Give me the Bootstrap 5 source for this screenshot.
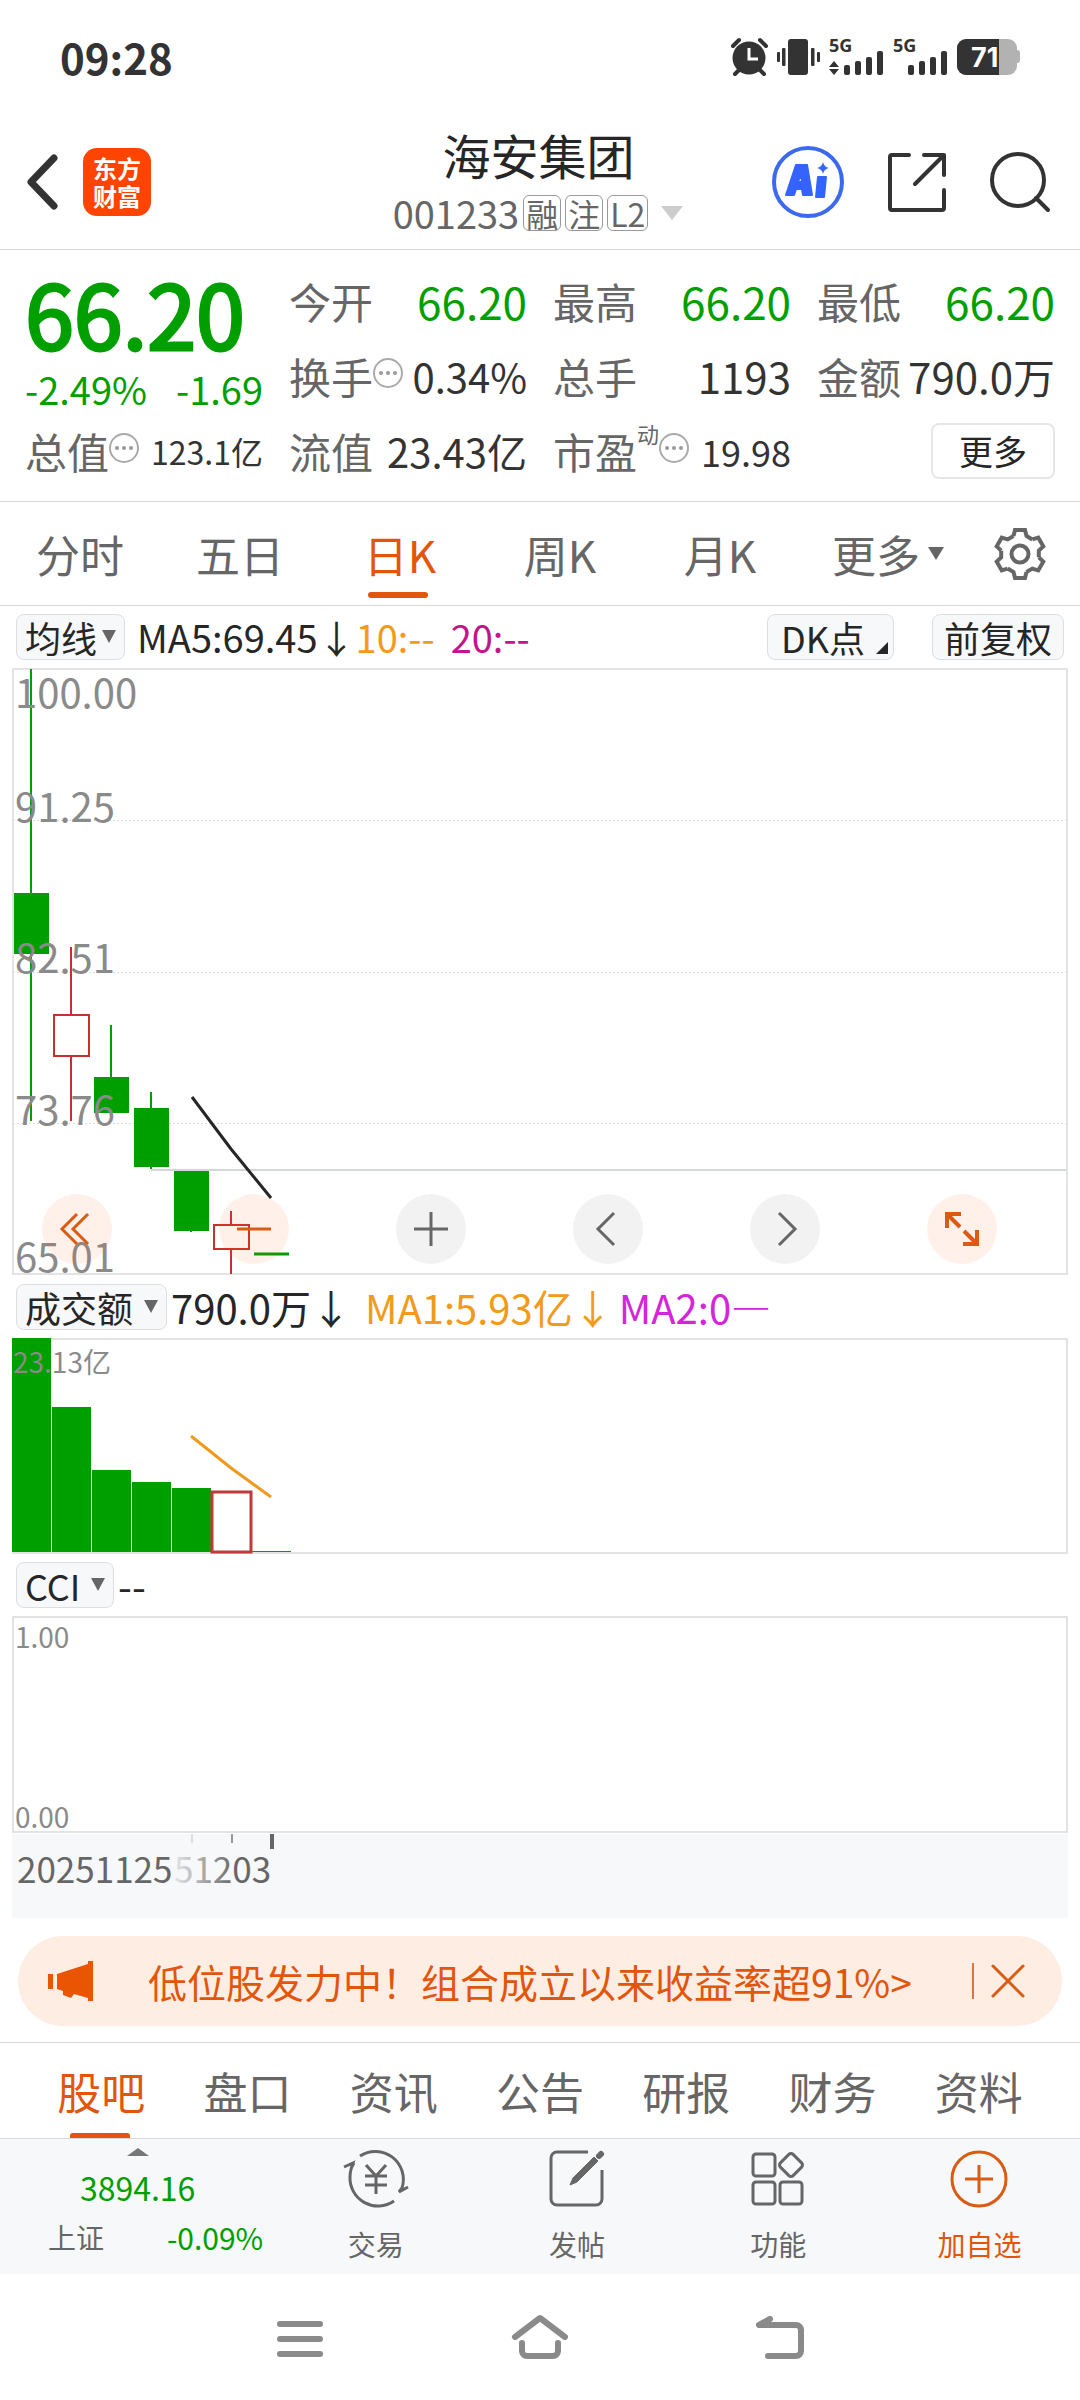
<!DOCTYPE html>
<html lang="zh-CN">
<head>
<meta charset="utf-8">
<meta name="viewport" content="width=device-width, initial-scale=1">
<title>海安集团 001233</title>
<link href="https://cdn.jsdelivr.net/npm/bootstrap@5.3.0/dist/css/bootstrap.min.css" rel="stylesheet">
<style>
  :root { --up: #c8302f; --down: #009f00; --accent: #e2560c; --ink: #262626; --ink2: #333; --muted2: #666; --line: #d6d8da; --soft: #f6f8fa; }
  body { font-family: "Noto Sans CJK SC", "Noto Sans", sans-serif; color: var(--ink2); background: #fff; line-height: 1; }
  svg { display: block; flex: none; overflow: visible; }
  button, .plain { border: 0; background: none; padding: 0; color: inherit; text-decoration: none; line-height: 1; }
  .down { color: var(--down); }
  .accent { color: var(--accent); }
  .dim { color: var(--muted2); }
  .rule-b { border-bottom: 1px solid var(--line); }

  .statusbar { height: 100px; padding: 14px 60px 0; }
  .clock { font-size: 42px; font-weight: 700; }
  .statusicons { gap: 9px; }

  .apphead { height: 150px; padding: 14px 30px 0 27px; }
  .side { flex: 1 1 0; }
  .tools { gap: 44px; }
  .logo { width: 68px; height: 68px; margin-left: 24px; border-radius: 14px; background: #ff4400; color: #fff; font-size: 24px; font-weight: 700; line-height: 28px; }
  .stockname { font-size: 48px; line-height: 62px; color: var(--ink); font-weight: 400; margin: 0; }
  .code { font-size: 38px; line-height: 56px; }
  .code svg { margin-left: 12px; }
  .flag { font-size: 32px; line-height: 34px; border: 1px solid #999; border-radius: 6px; padding: 0 2px; }

  .quote { height: 252px; display: grid; grid-template-columns: 238px 238px 238px 238px; justify-content: space-between; grid-template-rows: repeat(3, 75px); padding: 13px 25px 0; align-items: center; }
  .pricebox { grid-row: span 2; align-self: start; padding-top: 3px; }
  .price { font-size: 88px; line-height: 92px; -webkit-text-stroke: 3px currentColor; }
  .chg { font-size: 38px; line-height: 62px; }
  .lab { font-size: 42px; color: var(--muted2); }
  .v44 { font-size: 44px; } .v42 { font-size: 42px; } .v40 { font-size: 40px; } .v36 { font-size: 36px; } .v32 { font-size: 32px; }
  .dyn { font-size: 22px; padding-bottom: 36px; }
  .morebtn { width: 124px; height: 56px; border: 2px solid #e6e6e6; border-radius: 8px; font-size: 34px; color: var(--ink); }

  .tabs { height: 104px; font-size: 44px; color: var(--muted2); }
  .tabs .t { flex: 4 1 0; height: 102px; position: relative; }
  .tabs .g { flex: 3 1 0; }
  .on { color: var(--accent) !important; }
  .on::after { content: ""; position: absolute; left: 50%; margin-left: -32px; bottom: 7px; width: 60px; height: 6px; border-radius: 3px; background: var(--accent); }

  .ind { height: 62px; padding: 0 16px; font-size: 38px; color: var(--ink); }
  .ind.wide { font-size: 40px; }
  .pill { height: 46px; padding: 0 8px; border: 1px solid #dcdfe2; border-radius: 8px; background: var(--soft); font-size: 36px; color: var(--ink); display: inline-flex; align-items: center; }
  .pill select { appearance: none; border: 0; background: transparent; padding: 0; font: inherit; line-height: 44px; height: 44px; color: inherit; }
  .pill svg { margin-left: 4px; }
  .wide .pill svg { margin-left: 10px; }
  .pill.dk-point { padding: 0 5px 0 13px; margin-right: 38px; }
  .pill.dk-point svg { margin-left: 11px; align-self: flex-end; margin-bottom: 5px; }
  .pill.adj { padding: 0 11px; }
  .ma { padding-left: 12px; }
  .arr { width: 38px; text-align: center; }
  .o { color: #f39a1b; } .m { color: #c4148c; } .p { color: #d426d9; }

  .chartbox { margin: 0 12px; position: relative; }
  .chartbox > svg { width: 100%; height: auto; }
  .ctl { position: absolute; left: 30px; right: 71px; bottom: 12px; }
  .rnd { width: 70px; height: 70px; border-radius: 50%; display: flex; align-items: center; justify-content: center; background: rgba(0,0,0,.05); color: #666; }
  .rnd.hot { background: rgba(255,96,24,.09); color: #d95b14; }

  .promo { margin: 18px 18px 16px; height: 90px; border-radius: 45px; background: #fdede3; color: var(--accent); padding: 0 38px 0 30px; font-size: 39px; }
  .promo a { margin-left: 54px; }
  .sep { width: 2px; height: 36px; background: #d9763f; margin-right: 18px; }
  .subtabs { height: 96px; border-top: 1px solid var(--line); padding: 0 28px; font-size: 44px; color: var(--muted2); }
  .subtabs .t { flex: 1 1 0; position: relative; height: 95px; }
  .subtabs .on::after { bottom: 0; margin-left: -31px; height: 5px; border-radius: 3px 3px 0 0; }
  .dock { height: 136px; background: var(--soft); border-top: 1px solid var(--line); font-size: 28px; color: var(--muted2); }
  .idx { flex: 275 1 0; padding-top: 9px; }
  .idx .n { font-size: 32px; line-height: 62px; }
  .idx .r { font-size: 30px; line-height: 38px; padding: 0 12px 0 48px; }
  .idx .r .dim { font-size: 28px; }
  .dk { flex: 201 1 0; padding-top: 9px; gap: 22px; }
  .sysnav { height: 126px; padding: 0 180px; color: #8a8a8a; }
</style>
</head>
<body>

<div class="statusbar d-flex justify-content-between">
  <div class="clock d-flex align-items-center h-100">09:28</div>
  <div class="statusicons d-flex align-items-center h-100">
    <svg width="37" height="38" viewBox="0 0 37 38" fill="none" stroke="#333" stroke-width="4" aria-hidden="true"><circle cx="18" cy="20" r="16.500" fill="#333" stroke="none"/><path d="M2 8l6-6M35 8l-6-6M9 31l-5 5M28 31l5 5" stroke-linecap="round"/><path d="M18 10v11h9" stroke="#fff" stroke-width="3"/></svg>
    <svg width="43" height="38" viewBox="0 0 43 38" fill="#333" aria-hidden="true"><rect x="11" y="1" width="20" height="36" rx="3"/><rect x="5" y="10" width="3.500" height="18" rx="1"/><rect x="34" y="10" width="3.500" height="18" rx="1"/><rect x="0" y="14" width="3" height="10" rx="1"/><rect x="40" y="14" width="3" height="10" rx="1"/></svg>
    <svg width="55" height="38" viewBox="0 0 55 38" fill="#333"><text x="0" y="14" font-size="18" font-weight="700" font-family="Noto Sans">5G</text><path d="M0 29l5-6 5 6zM0 31h10l-5 6z"/><rect x="15" y="27" width="6" height="10" rx="2"/><rect x="26" y="23" width="6" height="14" rx="2"/><rect x="37" y="19" width="6" height="18" rx="2"/><rect x="48" y="13" width="6" height="24" rx="2"/></svg>
    <svg width="55" height="38" viewBox="0 0 55 38" fill="#333"><text x="0" y="14" font-size="18" font-weight="700" font-family="Noto Sans">5G</text><rect x="15" y="27" width="6" height="10" rx="2"/><rect x="26" y="23" width="6" height="14" rx="2"/><rect x="37" y="19" width="6" height="18" rx="2"/><rect x="48" y="13" width="6" height="24" rx="2"/></svg>
    <svg width="63" height="38" viewBox="0 0 63 38"><rect x="0" y="1" width="60" height="36" rx="9" fill="#b2b2b2"/><rect x="56" y="12" width="7" height="13" rx="3" fill="#b2b2b2"/><path d="M42 1H9a9 9 0 0 0-9 9v18a9 9 0 0 0 9 9h33z" fill="#333"/><text x="14" y="29" font-size="27" font-weight="700" fill="#fff" font-family="Inter">71</text></svg>
  </div>
</div>

<header class="apphead rule-b d-flex align-items-center">
  <div class="side d-flex align-items-center">
    <button aria-label="返回"><svg width="32" height="56" viewBox="0 0 32 56" fill="none" stroke="#333" stroke-width="7" stroke-linecap="round" stroke-linejoin="round"><path d="M27 4L4 28l23 24"/></svg></button>
    <div class="logo d-flex flex-column align-items-center justify-content-center"><span>东方</span><span>财富</span></div>
  </div>
  <div class="text-center">
    <h1 class="stockname">海安集团</h1>
    <div class="code dim d-flex align-items-center">
      <span class="me-1">001233</span>
      <div class="d-flex gap-1"><span class="flag">融</span><span class="flag">注</span><span class="flag">L2</span></div>
      <svg width="24" height="16" viewBox="0 0 24 16" fill="#ccc"><path d="M1 1h22L12 15z"/></svg>
    </div>
  </div>
  <div class="side tools d-flex align-items-center justify-content-end">
    <button aria-label="Ai"><svg width="72" height="74" viewBox="0 0 72 74"><circle cx="36" cy="37" r="34" fill="none" stroke="#3b6af0" stroke-width="4"/><g fill="#3563ff" stroke="#3563ff" stroke-width="2" stroke-linejoin="round"><path fill-rule="evenodd" d="M14 50l10-30h11l5 30h-9l-1-6h-6l-2 6zM26 37h4l-1-8z"/><path d="M46 32h8l-2 20h-8z"/><path stroke="none" d="M51 17q1 5 6 6-5 1-6 6-1-5-6-6 5-1 6-6z"/></g></svg></button>
    <button aria-label="分享"><svg width="58" height="60" viewBox="0 0 58 60" fill="none" stroke="#333" stroke-width="4" stroke-linecap="round" stroke-linejoin="round"><path d="M21 3H4a2 2 0 0 0-2 2v51a2 2 0 0 0 2 2h50a2 2 0 0 0 2-2V38M36 3h20v20M56 3L27 32"/></svg></button>
    <button aria-label="搜索"><svg width="60" height="62" viewBox="0 0 60 62" fill="none" stroke="#333" stroke-width="4" stroke-linecap="round"><circle cx="28" cy="29" r="26"/><path d="M46 47l12 12"/></svg></button>
  </div>
</header>

<section class="quote rule-b">
  <div class="pricebox down">
    <div class="price">66.20</div>
    <div class="chg d-flex justify-content-between"><span>-2.49%</span><span>-1.69</span></div>
  </div>
  <div class="d-flex justify-content-between align-items-center"><span class="lab">今开</span><span class="v44 down">66.20</span></div>
  <div class="d-flex justify-content-between align-items-center"><span class="lab">最高</span><span class="v44 down">66.20</span></div>
  <div class="d-flex justify-content-between align-items-center"><span class="lab">最低</span><span class="v44 down">66.20</span></div>
  <div class="d-flex align-items-center"><span class="lab">换手</span><svg class="me-auto" width="30" height="34" viewBox="0 0 30 34"><circle cx="15" cy="14" r="14" fill="none" stroke="#aaa" stroke-width="2"/><g fill="#999"><circle cx="8" cy="14" r="2"/><circle cx="15" cy="14" r="2"/><circle cx="22" cy="14" r="2"/></g></svg><span class="v40">0.34%</span></div>
  <div class="d-flex justify-content-between align-items-center"><span class="lab">总手</span><span class="v42">1193</span></div>
  <div class="d-flex justify-content-between align-items-center"><span class="lab">金额</span><span class="v42">790.0万</span></div>
  <div class="d-flex align-items-center"><span class="lab">总值</span><svg class="me-auto" width="30" height="34" viewBox="0 0 30 34"><circle cx="15" cy="14" r="14" fill="none" stroke="#aaa" stroke-width="2"/><g fill="#999"><circle cx="8" cy="14" r="2"/><circle cx="15" cy="14" r="2"/><circle cx="22" cy="14" r="2"/></g></svg><span class="v32">123.1亿</span></div>
  <div class="d-flex justify-content-between align-items-center"><span class="lab">流值</span><span class="v40">23.43亿</span></div>
  <div class="d-flex align-items-center"><span class="lab">市盈</span><span class="dyn dim">动</span><svg class="me-auto" width="30" height="34" viewBox="0 0 30 34"><circle cx="15" cy="14" r="14" fill="none" stroke="#aaa" stroke-width="2"/><g fill="#999"><circle cx="8" cy="14" r="2"/><circle cx="15" cy="14" r="2"/><circle cx="22" cy="14" r="2"/></g></svg><span class="v36">19.98</span></div>
  <div class="d-flex justify-content-end"><button class="morebtn">更多</button></div>
</section>

<nav class="tabs rule-b d-flex align-items-center">
  <a href="#" class="plain t d-flex align-items-center justify-content-center">分时</a>
  <a href="#" class="plain t d-flex align-items-center justify-content-center">五日</a>
  <a href="#" class="plain t on d-flex align-items-center justify-content-center">日K</a>
  <a href="#" class="plain t d-flex align-items-center justify-content-center">周K</a>
  <a href="#" class="plain t d-flex align-items-center justify-content-center">月K</a>
  <a href="#" class="plain t d-flex align-items-center justify-content-center gap-2"><span class="ms-3">更多</span><svg width="16" height="14" viewBox="0 0 16 14" fill="#666"><path d="M0 0h16L8 13z"/></svg></a>
  <button class="g d-flex justify-content-center" aria-label="设置"><svg width="54" height="54" viewBox="-27 -27 54 54" fill="none" stroke="#666" stroke-width="4" stroke-linejoin="miter"><defs><path id="tooth" d="M-6.500-18L-5-24H5L6.500-18 12.300-14.600"/></defs><use href="#tooth"/><use href="#tooth" transform="rotate(60)"/><use href="#tooth" transform="rotate(120)"/><use href="#tooth" transform="rotate(180)"/><use href="#tooth" transform="rotate(240)"/><use href="#tooth" transform="rotate(300)"/><circle r="8.500"/></svg></button>
</nav>

<div class="ind d-flex align-items-center">
  <label class="pill"><select aria-label="均线"><option>均线</option></select><svg width="14" height="14" viewBox="0 0 14 14" fill="#666"><path d="M0 0h14L7 13z"/></svg></label>
  <span class="ma">MA5:69.45</span><span class="arr">↓</span><span class="o me-3">10:--</span><span class="m">20:--</span>
  <button class="pill dk-point ms-auto">DK点<svg width="12" height="12" viewBox="0 0 12 12" fill="#262626"><path d="M12 0v12H0z"/></svg></button>
  <button class="pill adj">前复权</button>
</div>

<div class="chartbox">
  <svg viewBox="12 668 1056 608" font-size="40" fill="none">
    <g stroke="#ddd" stroke-width="1" stroke-dasharray="2 2"><path d="M13 820.500H1066M13 972.500H1066M13 1123.500H1066"/></g>
    <path d="M151 1170H1067" stroke="#d3d7d7" stroke-width="2"/>
    <rect x="13" y="669" width="1054" height="605" stroke="#e3e3e3" stroke-width="2"/>
    <g stroke="#009f00" stroke-width="2"><path d="M31 669V1121M111 1025V1114M151 1092V1169M191 1171V1232"/><path d="M254 1254H289" stroke-width="3"/></g>
    <g fill="#009f00"><rect x="14" y="893" width="35" height="61"/><rect x="94" y="1077" width="35" height="36"/><rect x="134" y="1108" width="35" height="59"/><rect x="174" y="1171" width="35" height="60"/></g>
    <g stroke="#c8302f" stroke-width="2"><path d="M71 947V1014M71 1057V1121M231 1211V1224M231 1250V1274"/><rect x="54" y="1015" width="35" height="41"/><rect x="214" y="1225" width="35" height="24"/></g>
    <path d="M192 1097L231 1149 271 1198" stroke="#262626" stroke-width="3"/>
    <g fill="#8a8a8a"><text x="15" y="708">100.00</text><text x="15" y="822">91.25</text><text x="15" y="973">82.51</text><text x="15" y="1125">73.76</text><text x="15" y="1272">65.01</text></g>
  </svg>
  <div class="ctl d-flex justify-content-between">
    <button class="rnd hot" aria-label="最早"><svg width="34" height="34" viewBox="0 0 34 34" fill="none" stroke="currentColor" stroke-width="3"><path d="M17 2L2 17l15 15M28 2L13 17l15 15"/></svg></button>
    <button class="rnd hot" aria-label="缩小"><svg width="34" height="34" viewBox="0 0 34 34" stroke="currentColor" stroke-width="3"><path d="M0 17h34"/></svg></button>
    <button class="rnd" aria-label="放大"><svg width="34" height="34" viewBox="0 0 34 34" stroke="currentColor" stroke-width="3"><path d="M0 17h34M17 0v34"/></svg></button>
    <button class="rnd" aria-label="左移"><svg width="34" height="34" viewBox="0 0 34 34" fill="none" stroke="currentColor" stroke-width="3"><path d="M23 1L7 17l16 16"/></svg></button>
    <button class="rnd" aria-label="右移"><svg width="34" height="34" viewBox="0 0 34 34" fill="none" stroke="currentColor" stroke-width="3"><path d="M11 1l16 16L11 33"/></svg></button>
    <button class="rnd hot" aria-label="全屏"><svg width="34" height="34" viewBox="0 0 34 34" fill="none" stroke="currentColor" stroke-width="4"><path d="M2 16V2h14M2 2l13 13M32 18v14H18M32 32L19 19"/></svg></button>
  </div>
</div>

<div class="ind wide d-flex align-items-center">
  <label class="pill"><select aria-label="成交额"><option>成交额</option></select><svg width="14" height="14" viewBox="0 0 14 14" fill="#666"><path d="M0 0h14L7 13z"/></svg></label>
  <span class="ps-1">790.0万</span><span class="arr me-3">↓</span><span class="o">MA1:5.93亿</span><span class="arr o me-2">↓</span><span class="p">MA2:0—</span>
</div>

<div class="chartbox">
  <svg viewBox="12 1338 1056 216" font-size="28" fill="none">
    <rect x="13" y="1339" width="1054" height="214" stroke="#e3e3e3" stroke-width="2"/>
    <g fill="#009f00"><rect x="12" y="1338" width="39" height="214"/><rect x="52" y="1407" width="39" height="145"/><rect x="92" y="1470" width="39" height="82"/><rect x="132" y="1482" width="39" height="70"/><rect x="172" y="1488" width="39" height="64"/><rect x="252" y="1551" width="39" height="1"/></g>
    <rect x="212" y="1492" width="39" height="60" fill="#fff" stroke="#bf3a38" stroke-width="3"/>
    <path d="M191 1436L231 1468 271 1497" stroke="#ef9a1c" stroke-width="3"/>
    <text x="13" y="1373" fill="#8a8a8a">23.13亿</text>
  </svg>
</div>

<div class="ind wide d-flex align-items-center">
  <label class="pill"><select aria-label="CCI"><option>CCI</option></select><svg width="14" height="14" viewBox="0 0 14 14" fill="#666"><path d="M0 0h14L7 13z"/></svg></label>
  <span class="ps-1">--</span>
</div>

<div class="chartbox">
  <svg viewBox="12 1616 1056 302" fill="none">
    <defs><linearGradient id="fade" gradientUnits="userSpaceOnUse" x1="165" y1="0" x2="235" y2="0"><stop offset="0" stop-color="#f7f8fa"/><stop offset="1" stop-color="#666"/></linearGradient></defs>
    <rect x="13" y="1617" width="1054" height="215" stroke="#e3e3e3" stroke-width="2"/>
    <rect x="12" y="1834" width="1056" height="84" fill="#f7f8fa"/>
    <path d="M192 1834v9" stroke="#ddd" stroke-width="2"/><path d="M232 1834v9" stroke="#999" stroke-width="2"/><path d="M272 1834v15" stroke="#666" stroke-width="4"/>
    <g fill="#8a8a8a" font-size="28"><text x="15" y="1648">1.00</text><text x="15" y="1828">0.00</text></g>
    <g font-size="35"><text x="17" y="1883" fill="#666">20251125</text><text x="174" y="1883" fill="url(#fade)">51203</text></g>
  </svg>
</div>

<div class="promo d-flex align-items-center">
  <svg width="46" height="40" viewBox="0 0 46 40" fill="#ea5504"><path d="M0 13h5v15H0zM9 13L40 3V0h5v40h-5v-3l-14-4-3 4-8-3v-4l-6-2z"/></svg>
  <a href="#" class="plain">低位股发力中！组合成立以来收益率超91%&gt;</a>
  <span class="sep ms-auto"></span>
  <button aria-label="关闭"><svg width="32" height="32" viewBox="0 0 32 32" stroke="#d95b14" stroke-width="3" stroke-linecap="round"><path d="M1 1l30 30M31 1L1 31"/></svg></button>
</div>

<nav class="subtabs d-flex">
  <a href="#" class="plain t on d-flex align-items-center justify-content-center">股吧</a>
  <a href="#" class="plain t d-flex align-items-center justify-content-center">盘口</a>
  <a href="#" class="plain t d-flex align-items-center justify-content-center">资讯</a>
  <a href="#" class="plain t d-flex align-items-center justify-content-center">公告</a>
  <a href="#" class="plain t d-flex align-items-center justify-content-center">研报</a>
  <a href="#" class="plain t d-flex align-items-center justify-content-center">财务</a>
  <a href="#" class="plain t d-flex align-items-center justify-content-center">资料</a>
</nav>

<nav class="dock d-flex">
  <a href="#" class="plain idx d-flex flex-column align-items-stretch down">
    <svg class="mx-auto" width="22" height="8" viewBox="0 0 22 8" fill="#777"><path d="M11 0l11 8H0z"/></svg>
    <span class="n text-center">3894.16</span>
    <span class="r d-flex justify-content-between"><span class="dim">上证</span><span>-0.09%</span></span>
  </a>
  <a href="#" class="plain dk d-flex flex-column align-items-center"><svg width="66" height="60" viewBox="0 0 66 60" fill="none" stroke="#666" stroke-width="3"><path d="M17 8a28 28 0 0 1 42 32l-3 4 9-5M11 15q-4 6-4 14a28 28 0 0 0 44 24M1 19l9-4-2 6"/><path d="M23 17l10 11 10-11M33 28v18M22 28h22M22 37h22"/></svg>交易</a>
  <a href="#" class="plain dk d-flex flex-column align-items-center"><svg width="56" height="60" viewBox="0 0 56 60" fill="none" stroke="#666" stroke-width="3"><path d="M39 4H8a6 6 0 0 0-6 6v41a6 6 0 0 0 6 6h39a6 6 0 0 0 6-6V22"/><path d="M21 37l3-7 21-21 4 4-21 21z" fill="#666" stroke-width="1"/><path d="M50 8l2-2" stroke-width="6" stroke-linecap="round"/></svg>发帖</a>
  <a href="#" class="plain dk d-flex flex-column align-items-center"><svg width="56" height="60" viewBox="0 0 56 60" fill="none" stroke="#666" stroke-width="3"><rect x="3" y="6" width="22" height="22" rx="3"/><rect x="3" y="34" width="22" height="22" rx="3"/><rect x="30" y="34" width="22" height="22" rx="3"/><rect x="32" y="8" width="18" height="18" rx="3" transform="rotate(45 41 17)"/></svg>功能</a>
  <a href="#" class="plain dk d-flex flex-column align-items-center accent"><svg width="58" height="60" viewBox="0 0 58 60" fill="none" stroke="#d95b14" stroke-width="3"><circle cx="29" cy="31" r="27"/><path d="M15 31h28M29 17v28"/></svg>加自选</a>
</nav>

<div class="sysnav d-flex align-items-center">
  <button class="w-100 d-flex justify-content-center" aria-label="菜单"><svg width="46" height="44" viewBox="0 0 46 44" stroke="currentColor" stroke-width="6" stroke-linecap="round"><path d="M3 9h40M3 24h40M3 39h40"/></svg></button>
  <button class="w-100 d-flex justify-content-center" aria-label="主页"><svg width="58" height="44" viewBox="0 0 58 44" fill="none" stroke="currentColor" stroke-width="6" stroke-linecap="round" stroke-linejoin="round"><path d="M4 22L29 3l25 19M11 28v8a5 5 0 0 0 5 5h26a5 5 0 0 0 5-5v-8"/></svg></button>
  <button class="w-100 d-flex justify-content-center" aria-label="返回"><svg width="50" height="44" viewBox="0 0 50 44" fill="none" stroke="currentColor" stroke-width="6" stroke-linecap="round" stroke-linejoin="round"><path d="M15 4L4 10h37a5 5 0 0 1 5 5v21a5 5 0 0 1-5 5H13"/></svg></button>
</div>

<script src="https://cdn.jsdelivr.net/npm/bootstrap@5.3.0/dist/js/bootstrap.bundle.min.js"></script>
</body>
</html>
